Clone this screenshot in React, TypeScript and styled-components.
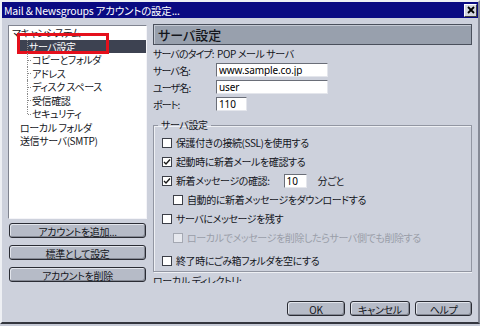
import styled, { createGlobalStyle } from 'styled-components'

const GlobalStyle = createGlobalStyle`
    html, body {
        margin: 0;
        padding: 0;
        background: #c6cad6;
    }
    body {
        font-family: "Noto Sans CJK JP", "Noto Sans", sans-serif;
        font-size: 10px;
        font-feature-settings: "palt";
        letter-spacing: -0.4px;
        color: #14161c;
    }
    * {
        box-sizing: border-box;
    }
`

const Window = styled.div`
    width: 480px;
    height: 324px;
    display: flex;
    flex-direction: column;
    background: #cdd1dc;
    border-top: 2px solid #eef0f4;
    border-left: 2px solid #eef0f4;
    border-right: 2px solid #868a96;
    border-bottom: 2px solid #34363e;
`

const TitleBar = styled.div`
    height: 16px;
    display: flex;
    align-items: center;
    justify-content: space-between;
    padding: 0 1px 0 2px;
    background: #0a0a82;
    color: #fff;
    font-size: 10.5px;
    letter-spacing: -0.2px;
    white-space: nowrap;
`

const CloseButton = styled.div`
    width: 13px;
    height: 13px;
    display: grid;
    place-items: center;
    background: #d4d6de;
    border: 1px solid;
    border-color: #fff #404040 #404040 #fff;
`

const Body = styled.div`
    display: flex;
    gap: 6px;
    padding: 6px 4px 0 6px;
`

const LeftColumn = styled.div`
    width: 139px;
    display: flex;
    flex-direction: column;
`

const Tree = styled.div`
    margin-top: 1px;
    height: 194px;
    background: #fff;
    border: 1px solid;
    border-color: #808490 #f4f4f8 #f4f4f8 #808490;
    overflow: hidden;
`

const TreeRow = styled.div<{ $indent: number; $child?: boolean; $last?: boolean; $selected?: boolean }>`
    position: relative;
    height: 13.5px;
    line-height: 13.5px;
    padding-left: ${(p) => p.$indent}px;
    white-space: nowrap;
    color: ${(p) => (p.$selected ? '#fff' : '#14161c')};
    background: ${(p) =>
        p.$selected ? 'linear-gradient(to right, transparent 9px, #3d4251 9px)' : 'none'};

    ${(p) =>
        p.$child &&
        `
        &::before {
            content: '';
            position: absolute;
            left: 18px;
            top: 0;
            height: ${p.$last ? '50%' : '100%'};
            border-left: 1px dotted #8a8a8a;
        }
        &::after {
            content: '';
            position: absolute;
            left: 19px;
            top: 50%;
            width: 3px;
            border-top: 1px dotted #8a8a8a;
        }
    `}
`

const Marker = styled.span`
    position: absolute;
    left: 8px;
    top: -6.5px;
    width: 92px;
    height: 21px;
    border: 3px solid #e4101c;
`

const SideButtons = styled.div`
    margin-top: 4px;
    display: flex;
    flex-direction: column;
    gap: 7px;
    padding-left: 1px;
`

const Button = styled.button<{ $w: number }>`
    width: ${(p) => p.$w}px;
    height: 15px;
    padding: 0;
    font-family: inherit;
    font-size: 10px;
    font-feature-settings: "palt";
    letter-spacing: -0.3px;
    color: #14161c;
    background: #b6bbc7;
    border: 1px solid #2a2c34;
    border-radius: 3px;
    box-shadow: inset 1px 1px 0 #e2e5ec, inset -1px -1px 0 #858994;
`

const RightColumn = styled.div`
    width: 319px;
    height: 259px;
    overflow: hidden;
    display: flex;
    flex-direction: column;
`

const Header = styled.div`
    height: 21px;
    flex-shrink: 0;
    padding-left: 4px;
    line-height: 19px;
    font-size: 13px;
    font-weight: 500;
    letter-spacing: 0;
    background: #98a0ad;
    border: 1px solid #4a505c;
    box-shadow: inset 1px 1px 0 #c4c9d3;
`

const InfoGrid = styled.div`
    margin-top: 1px;
    display: grid;
    grid-template-columns: 63px 1fr;
    grid-auto-rows: 14px;
    row-gap: 3px;
    align-items: center;
    white-space: nowrap;
`

const FieldLabel = styled.span`
    letter-spacing: -0.9px;
`

const FieldValue = styled.span`
    padding-left: 1px;
`

const TextInput = styled.input<{ $w: number }>`
    width: ${(p) => p.$w}px;
    height: 14px;
    padding: 0 2px;
    font-family: "Noto Sans", "Noto Sans CJK JP", sans-serif;
    font-size: 10px;
    letter-spacing: -0.1px;
    color: #000;
    background: #fff;
    border: 1px solid;
    border-color: #6a6e78 #e4e6ec #e4e6ec #6a6e78;
    outline: none;
`

const Group = styled.fieldset`
    margin: 8px 0 0 0;
    padding: 2px 0 1px 8px;
    min-width: 0;
    border: 1px solid #9296a2;
    box-shadow: inset 1px 1px 0 #eef0f4, 1px 1px 0 #eef0f4;
`

const Legend = styled.legend`
    margin-left: -4px;
    padding: 0 3px;
    line-height: 12px;
    font-size: 10px;
`

const CheckRow = styled.div<{ $indent?: number; $muted?: boolean; $spaced?: boolean }>`
    height: 19px;
    display: flex;
    align-items: center;
    gap: 4px;
    padding-left: ${(p) => p.$indent ?? 0}px;
    margin-top: ${(p) => (p.$spaced ? 4 : 0)}px;
    color: ${(p) => (p.$muted ? '#9a9ea9' : '#14161c')};
    white-space: nowrap;
`

const Box = styled.span<{ $muted?: boolean }>`
    width: 10px;
    height: 10px;
    flex-shrink: 0;
    display: grid;
    place-items: center;
    background: ${(p) => (p.$muted ? '#e6e8ee' : '#fff')};
    border: 1px solid ${(p) => (p.$muted ? '#a4a8b2' : '#3c3f48')};
`

const IntervalInput = styled(TextInput)`
    margin-left: 10px;
`

const Suffix = styled.span`
    margin-left: 7px;
`

const Caption = styled.div`
    margin-top: 3px;
    line-height: 12px;
    white-space: nowrap;
`

const Footer = styled.div`
    margin-top: 18px;
    display: flex;
    justify-content: flex-end;
    gap: 5px;
    padding-right: 6px;
`

const Check = ({ checked, muted }: { checked?: boolean; muted?: boolean }) => (
    <Box $muted={muted}>
        {checked && (
            <svg width="8" height="8" viewBox="0 0 8 8">
                <path d="M1 4 L3 6 L7 1.5" fill="none" stroke="#1a1a1a" strokeWidth="1.4" />
            </svg>
        )}
    </Box>
)

const children = ['コピーとフォルダ', 'アドレス', 'ディスク スペース', '受信確認', 'セキュリティ']

const App = () => {
    return (
        <>
            <GlobalStyle />
            <Window>
                <TitleBar>
                    <span>Mail &amp; Newsgroups アカウントの設定...</span>
                    <CloseButton>
                        <svg width="8" height="8" viewBox="0 0 8 8">
                            <path d="M1 1 L7 7 M7 1 L1 7" stroke="#000" strokeWidth="1.8" />
                        </svg>
                    </CloseButton>
                </TitleBar>
                <Body>
                    <LeftColumn>
                        <Tree>
                            <TreeRow $indent={3}>マキャンシステム</TreeRow>
                            <TreeRow $indent={20} $child $selected>
                                サーバ設定
                                <Marker />
                            </TreeRow>
                            {children.map((label, index) => (
                                <TreeRow
                                    key={label}
                                    $indent={23}
                                    $child
                                    $last={index === children.length - 1}
                                >
                                    {label}
                                </TreeRow>
                            ))}
                            <TreeRow $indent={11}>ローカル フォルダ</TreeRow>
                            <TreeRow $indent={11}>送信サーバ(SMTP)</TreeRow>
                        </Tree>
                        <SideButtons>
                            <Button $w={137}>アカウントを追加...</Button>
                            <Button $w={137}>標準として設定</Button>
                            <Button $w={137}>アカウントを削除</Button>
                        </SideButtons>
                    </LeftColumn>
                    <RightColumn>
                        <Header>サーバ設定</Header>
                        <InfoGrid>
                            <FieldLabel>サーバのタイプ:</FieldLabel>
                            <FieldValue>POP メール サーバ</FieldValue>
                            <FieldLabel>サーバ名:</FieldLabel>
                            <TextInput $w={112} defaultValue="www.sample.co.jp" />
                            <FieldLabel>ユーザ名:</FieldLabel>
                            <TextInput $w={112} defaultValue="user" />
                            <FieldLabel>ポート:</FieldLabel>
                            <TextInput $w={31} defaultValue="110" />
                        </InfoGrid>
                        <Group>
                            <Legend>サーバ設定</Legend>
                            <CheckRow>
                                <Check />
                                保護付きの接続(SSL)を使用する
                            </CheckRow>
                            <CheckRow>
                                <Check checked />
                                起動時に新着メールを確認する
                            </CheckRow>
                            <CheckRow>
                                <Check checked />
                                新着メッセージの確認:
                                <IntervalInput $w={23} defaultValue="10" />
                                <Suffix>分ごと</Suffix>
                            </CheckRow>
                            <CheckRow $indent={11}>
                                <Check />
                                自動的に新着メッセージをダウンロードする
                            </CheckRow>
                            <CheckRow>
                                <Check />
                                サーバにメッセージを残す
                            </CheckRow>
                            <CheckRow $indent={11} $muted>
                                <Check muted />
                                ローカルでメッセージを削除したらサーバ側でも削除する
                            </CheckRow>
                            <CheckRow $spaced>
                                <Check />
                                終了時にごみ箱フォルダを空にする
                            </CheckRow>
                        </Group>
                        <Caption>ローカル ディレクトリ:</Caption>
                    </RightColumn>
                </Body>
                <Footer>
                    <Button $w={58}>OK</Button>
                    <Button $w={60}>キャンセル</Button>
                    <Button $w={57}>ヘルプ</Button>
                </Footer>
            </Window>
        </>
    )
}

export default App
